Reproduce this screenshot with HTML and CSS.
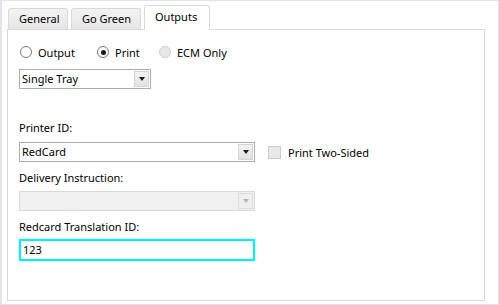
FILE: index.html
```html
<!DOCTYPE html>
<html>
<head>
<meta charset="utf-8">
<link rel="stylesheet" href="styles.css">
</head>
<body>
<div class="window">
  <div class="tabs">
    <div class="tab t-general">General</div>
    <div class="tab t-green">Go Green</div>
    <div class="tab active t-out">Outputs</div>
  </div>
  <div class="panel">
    <div class="radios">
      <label class="radio r-output"><span class="rb"></span>Output</label>
      <label class="radio r-print"><span class="rb checked"></span>Print</label>
      <label class="radio disabled"><span class="rb"></span>ECM Only</label>
    </div>
    <div class="combo small"><span class="val">Single Tray</span><span class="btn"><span class="arr"></span></span></div>
    <div class="label l-printer">Printer ID:</div>
    <div class="row">
      <div class="combo wide"><span class="val">RedCard</span><span class="btn"><span class="arr"></span></span></div>
      <label class="check"><span class="cb"></span>Print Two-Sided</label>
    </div>
    <div class="label">Delivery Instruction:</div>
    <div class="combo wide disabled"><span class="val"></span><span class="btn"><span class="arr"></span></span></div>
    <div class="label">Redcard Translation ID:</div>
    <div class="textbox">123</div>
  </div>
</div>
</body>
</html>
```

FILE: styles.css
```css
html, body {
  margin: 0;
  padding: 0;
  background: #ffffff;
}
body {
  font-family: "Noto Sans", "Open Sans", sans-serif;
  font-size: 11px;
  color: #000;
}
.window {
  box-sizing: border-box;
  width: 499px;
  height: 305px;
  border: 1px solid #e3e3ee;
  border-left-width: 2px;
  padding: 4px 0 0 5px;
  background: #fff;
}
.tabs {
  display: flex;
  align-items: flex-end;
  height: 24px;
  margin-left: 1px;
  position: relative;
  z-index: 1;
}
.tab {
  box-sizing: border-box;
  height: 21px;
  border: 1px solid #d9d9d9;
  border-bottom: none;
  border-radius: 3px 3px 0 0;
  background: linear-gradient(#f3f3f3, #e6e6e6);
  line-height: 19px;
  padding-left: 10px;
  margin-right: 3px;
}
.t-general { width: 60px; }
.t-green { width: 70px; }
.t-out { width: 66px; }
.tab.active {
  background: #fff;
  margin-bottom: -1px;
  height: 25px;
  line-height: 21px;
}
.panel {
  box-sizing: border-box;
  width: 478px;
  height: 272px;
  border: 1px solid #d9d9d9;
  padding: 14px 0 0 11px;
  display: flex;
  flex-direction: column;
  align-items: flex-start;
}
.radios {
  display: flex;
  height: 16px;
  align-items: center;
  margin-left: 1px;
}
.radio {
  display: flex;
  align-items: center;
  gap: 6px;
}
.r-output { width: 77px; }
.r-print { width: 62px; }
.rb {
  box-sizing: border-box;
  width: 12px;
  height: 12px;
  border: 1px solid #7a7a7a;
  border-radius: 50%;
  background: #fff;
  position: relative;
}
.rb.checked::after {
  content: "";
  position: absolute;
  left: 2.5px;
  top: 2.5px;
  width: 5px;
  height: 5px;
  border-radius: 50%;
  background: #1a1a1a;
}
.radio.disabled .rb {
  border-color: #d0d0d0;
  background: #e6e6e6;
}
.combo {
  box-sizing: border-box;
  height: 20px;
  border: 1px solid #acacac;
  background: #fff;
  display: flex;
  align-items: stretch;
}
.combo.small {
  width: 132px;
  margin-top: 9px;
}
.combo.wide { width: 236px; }
.combo .val {
  flex: 1;
  padding-left: 2px;
  line-height: 18px;
}
.combo .btn {
  box-sizing: border-box;
  width: 15px;
  margin: 1px;
  border: 1px solid #d5d5d5;
  background: linear-gradient(#f2f2f2, #e2e2e2);
  display: flex;
  align-items: center;
  justify-content: center;
}
.arr {
  width: 0;
  height: 0;
  border-left: 3px solid transparent;
  border-right: 3px solid transparent;
  border-top: 4px solid #1a1a1a;
}
.combo.disabled {
  background: #f0f0f0;
  border-color: #d9d9d9;
  margin-top: 5px;
}
.combo.disabled .btn {
  border-color: #dcdcdc;
  background: #efefef;
}
.combo.disabled .arr { border-top-color: #b5b5b5; }
.label {
  height: 16px;
  line-height: 15px;
  margin-top: 8px;
}
.l-printer { margin-top: 31px; }
.row {
  display: flex;
  align-items: center;
  margin-top: 6px;
}
.check {
  display: flex;
  align-items: center;
  gap: 7px;
  margin-left: 13px;
}
.cb {
  box-sizing: border-box;
  width: 13px;
  height: 13px;
  border: 1px solid #cccccc;
  background: #e8e8e8;
}
.textbox {
  box-sizing: border-box;
  width: 236px;
  height: 22px;
  margin-top: 4px;
  border: 2px solid #00f0f8;
  box-shadow: 0 0 1px #7ff;
  padding-left: 2px;
  line-height: 18px;
}
```
